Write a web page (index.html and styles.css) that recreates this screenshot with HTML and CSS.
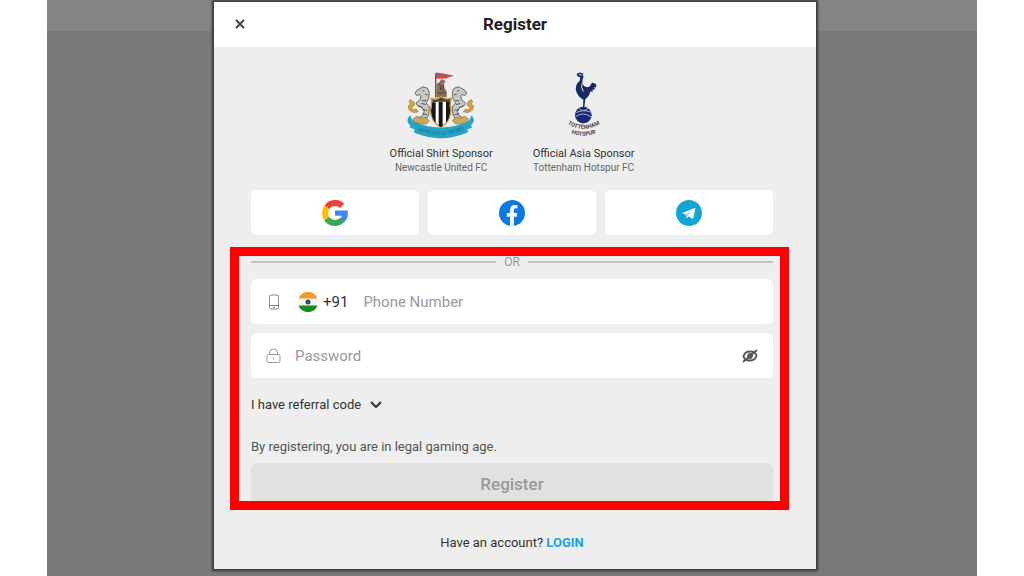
FILE: index.html
```html
<!DOCTYPE html>
<html lang="en">
<head>
  <meta charset="UTF-8">
  <meta name="viewport" content="width=device-width, initial-scale=1.0">
  <title>Register</title>
  <link rel="stylesheet" href="styles.css">
</head>
<body>
  <div class="backdrop">
    <main class="modal">
      <header class="modal-header">
        <button class="close" type="button" aria-label="Close">
          <svg width="10" height="10" viewBox="0 0 10 10"><path d="M1 1l8 8M9 1l-8 8" stroke="#444" stroke-width="2" fill="none"/></svg>
        </button>
        <h1>Register</h1>
      </header>

      <div class="modal-body">
        <div class="sponsors">
          <div class="sponsor">
            <svg width="68" height="67" viewBox="54 38 204 200" aria-hidden="true">
              <!-- flag and castle -->
              <path d="M140 42v72" stroke="#555" stroke-width="4"/>
              <path d="M141 39l22 3 32 7-26 8-28 1z" fill="#d8474b"/>
              <path d="M141 41l24 4-24 5z" fill="#7d6577"/>
              <path d="M143 73l9-6 4-8 8 2 6 5-6 7 3 14 6 8v18h-31V97z" fill="#8b7257"/>
              <path d="M150 75l7 5-4 12m11-17l-3 17M145 98l9 5 9-5 9 5" stroke="#3f3933" stroke-width="3" fill="none"/>
              <!-- seahorses -->
              <g id="seahorse">
                <path d="M76 129l-12-9-4 7 6 7-9 5 4 13 13 7 14-2-6-8-9 2-6-8 9-5z" fill="#d9a531" stroke="#94753c" stroke-width="2"/>
                <path d="M102 82l13 4 6 12-2 20-8 12 10 12-2 25-9 13-15 5-8-10 14-6 5-14-9-13-11-3-5-8 12-10 3-12-3-4-10 3-5-7 6-9z" fill="#c9c9c9" stroke="#666" stroke-width="3"/>
                <path d="M101 93l5 2M99 124l13-1M97 132l13 3M101 151l14 1M101 162l13 4M88 139l14 7M108 104l8 2" stroke="#555" stroke-width="3"/>
                <path d="M72 179l12-9 12 7 14-4 11 11-9 9-18 1-19-5z" fill="#cda950" stroke="#7c6845" stroke-width="2"/>
              </g>
              <use href="#seahorse" transform="translate(311 0) scale(-1 1)"/>
              <!-- shield -->
              <path d="M127 117q14 5 29-5 14 10 31 4-5 16-1 36-2 36-31 50-28-13-31-50 6-16 3-35z" fill="#fff" stroke="#c79b3c" stroke-width="4"/>
              <path d="M129 128h11v62q-12-12-14-38 5-12 3-24zM149 126h12v74l-6 3-6-4zM171 126h12q-3 14 1 26-2 25-13 38z" fill="#171719"/>
              <path d="M129 119q14 5 27-5 14 9 28 4l-3 10q-25-4-50 0z" fill="#4d4131"/>
              <!-- ribbon -->
              <path d="M64 168q-10 7-8 20l8 11-1 6 14 4-2 10q42 18 80 17 40 0 82-18l-2-9 14-4-3-7 8-11q2-13-7-19l-6 16q-40 20-86 20t-85-21z" fill="#25a4c4"/>
              <path id="ribbon-line" d="M72 206q80 40 168-1" fill="none"/>
              <text class="ribbon-text"><textPath href="#ribbon-line" startOffset="50%">NEWCASTLE UNITED</textPath></text>
            </svg>
            <strong>Official Shirt Sponsor</strong>
            <span>Newcastle United FC</span>
          </div>
          <div class="sponsor">
            <svg width="34" height="67" viewBox="114 36 102 200" aria-hidden="true">
              <!-- cockerel -->
              <path d="M143 42q8-6 16-3 5 4 4 13-6 12 1 24 7 8 18 3l7-11q6-1 13 5l-1 8-7 1 5 5-9 2 2 6-8-1q-3 14-15 23l-3 24 9 3-1 3-9-2-8 7-3-2 8-9 1-22q-18-11-22-28-3-18 11-29l2-11-8-2z" fill="#192866"/>
              <path d="M150 43l8 2M160 68q-6 14 3 26" stroke="#e5e8ef" stroke-width="3" fill="none"/>
              <path d="M149 43l-4-5M155 41l-1-5M160 43l3-5" stroke="#333b55" stroke-width="2"/>
              <!-- ball -->
              <circle cx="163" cy="165" r="25" fill="#1b2a75"/>
              <path d="M142 157q23-10 44-1M140 169q24-16 47 2M151 146q11 10 26-1" stroke="#a9b7d6" stroke-width="3" fill="none"/>
              <path id="name-top" d="M116 192q47 28 96 0" fill="none"/>
              <path id="name-bottom" d="M120 216q43 22 88 0" fill="none"/>
              <text class="crest-text"><textPath href="#name-top" startOffset="50%">TOTTENHAM</textPath></text>
              <text class="crest-text"><textPath href="#name-bottom" startOffset="50%">HOTSPUR</textPath></text>
            </svg>
            <strong>Official Asia Sponsor</strong>
            <span>Tottenham Hotspur FC</span>
          </div>
        </div>

        <div class="social">
          <button type="button" aria-label="Google">
            <svg width="26" height="26" viewBox="0 0 26 26" fill="none" stroke-width="6">
              <path d="M5 7.200a10 10 0 0 1 15.200-1.300" stroke="#ea4335"/>
              <path d="M4.800 18.700a10 10 0 0 1 .2-11.500" stroke="#fbbc05"/>
              <path d="M20 20.200a10 10 0 0 1-15.200-1.500" stroke="#34a853"/>
              <path d="M13 10.500h12.800q.9 7.500-3.700 12l-4.400-3.600q1.700-1.200 2.300-3.200H13z" fill="#4285f4"/>
            </svg>
          </button>
          <button type="button" aria-label="Facebook">
            <svg width="26" height="26" viewBox="0 0 26 26">
              <circle cx="13" cy="13" r="13" fill="#0b78e3"/>
              <path d="M11 25.800v-9H7.800V13H11v-2.800c0-3.400 2-5.200 4.900-5.200 1.200 0 2.500.2 2.500.2v3h-1.500c-1.600 0-2 .9-2 1.900V13h3.400l-.6 3.800h-2.800v9a13 13 0 0 1-3.900 0z" fill="#fff"/>
            </svg>
          </button>
          <button type="button" aria-label="Telegram">
            <svg width="26" height="26" viewBox="0 0 26 26">
              <circle cx="13" cy="13" r="13" fill="#13a5d8"/>
              <path d="M6 13.200L18.500 8q1-.3.800.9L17.300 18q-.4 1.200-1.400.5l-3-2.200-1.800 1.700q-.5.400-.6-.5L9.600 14.500z" fill="#fff"/>
              <path d="M9.700 14.400l6.800-4.200-4.800 5.300-.6 2.500z" fill="#8bd2eb"/>
            </svg>
          </button>
        </div>

        <form class="register-form">
          <div class="divider"><span>OR</span></div>

          <div class="field phone">
            <svg width="16" height="16" viewBox="0 0 16 16" fill="none" stroke="#888"><rect x="3.500" y="1" width="9" height="14" rx="1.500"/><path d="M3.500 11.500h9M7 13.300h2"/></svg>
            <label class="country" for="phone">
              <svg width="20" height="20" viewBox="0 0 20 20" aria-hidden="true">
                <circle cx="10" cy="10" r="10" fill="#f4f4f2"/>
                <path d="M.6 6.500a10 10 0 0 1 18.800 0z" fill="#f29a2e"/>
                <path d="M.6 13.500a10 10 0 0 0 18.800 0z" fill="#168a1d"/>
                <circle cx="10" cy="10" r="2.500" fill="#39466d"/>
              </svg>
              +91
            </label>
            <input id="phone" type="tel" placeholder="Phone Number">
          </div>

          <div class="field">
            <label class="lock" for="password" aria-label="Password">
              <svg width="16" height="16" viewBox="0 0 16 16" fill="none" stroke="#999"><rect x="1" y="6.500" width="13" height="8" rx="1.500"/><path d="M3.500 6.500V5a4 4 0 0 1 8 0v1.500M7.500 9.500v2"/></svg>
            </label>
            <input id="password" type="password" placeholder="Password">
            <button class="reveal" type="button" aria-label="Show password">
              <svg width="16" height="14" viewBox="0 0 16 14" fill="none" stroke="#555" stroke-width="1.800"><path d="M1.500 7.500q1-5 6.500-5t6.500 4q-1 5-6.500 5t-6.500-4z"/><circle cx="8" cy="7" r="2"/><path d="M1 13L15 1"/></svg>
            </button>
          </div>

          <button class="referral" type="button">
            I have referral code
            <svg width="12" height="8" viewBox="0 0 12 8"><path d="M1 1l5 5 5-5" fill="none" stroke="#333" stroke-width="2"/></svg>
          </button>
          <p class="legal">By registering, you are in legal gaming age.</p>
          <button class="submit" type="submit" disabled>Register</button>
          <div class="highlight"></div>
        </form>

        <p class="login">Have an account? <a href="#">LOGIN</a></p>
      </div>
    </main>
  </div>
</body>
</html>
```
FILE: styles.css
```css
* {
  box-sizing: border-box;
}
body {
  margin: 0;
  background: #fff;
  color: #333;
  font-family: Roboto, "Liberation Sans", sans-serif;
}
button, input {
  font-family: inherit;
  border: none;
  padding: 0;
}
svg {
  display: block;
  flex: none;
}
.backdrop {
  min-height: 100vh;
  margin: 0 47px;
  padding: 2px 161px 6px 167px;
  background: linear-gradient(#848484 31px, #797979 31px);
}
.modal {
  background: #eee;
  box-shadow: 0 0 2px 2px #3a3a3a;
}
.modal-header {
  display: grid;
  grid-template-columns: 40px 1fr 46px;
  align-items: center;
  height: 45px;
  padding: 0 0 2px 6px;
  background: #fff;
}
.close {
  display: grid;
  place-items: center;
  height: 40px;
  background: none;
}
.modal-header h1 {
  margin: 0;
  font-size: 17px;
  line-height: 20px;
  font-weight: 700;
  color: #222;
  text-align: center;
}
.modal-body {
  padding: 25px 43px 17px 37px;
}

.sponsors {
  display: flex;
  justify-content: center;
  gap: 40px;
}
.sponsor {
  display: flex;
  flex-direction: column;
  align-items: center;
}
.sponsor strong {
  margin-top: 8px;
  font-size: 11px;
  line-height: 14px;
  font-weight: 400;
  color: #333;
}
.sponsor span {
  font-size: 10px;
  line-height: 14px;
  color: #666;
}
.ribbon-text {
  font-size: 15px;
  fill: #12718c;
  text-anchor: middle;
}
.crest-text {
  font-size: 17px;
  font-weight: 700;
  fill: #444;
  text-anchor: middle;
}

.social {
  display: grid;
  grid-template-columns: repeat(3, 1fr);
  gap: 9px;
  margin-top: 15px;
}
.social button {
  display: grid;
  place-items: center;
  height: 45px;
  border-radius: 6px;
  background: #fff;
}

.register-form {
  position: relative;
  margin-top: 12px;
  padding-top: 7px;
}
/* red frame lies over the form */
.highlight {
  position: absolute;
  inset: 0 -16px -5px -21px;
  border: 9px solid #f00;
  pointer-events: none;
}
.divider {
  display: flex;
  align-items: center;
  gap: 8px;
  height: 16px;
  font-size: 12px;
  color: #999;
}
.divider::before, .divider::after {
  content: "";
  flex: 1;
  height: 2px;
  background: #c2c2c2;
}
.field {
  display: flex;
  align-items: center;
  height: 45px;
  margin-top: 9px;
  padding: 0 15px;
  border-radius: 6px;
  background: #fff;
}
.country {
  display: flex;
  align-items: center;
  gap: 5px;
  margin: 0 15px 0 16px;
  font-size: 15px;
  color: #333;
}
.lock {
  margin-right: 13px;
}
.field input {
  flex: 1;
  min-width: 0;
  height: 40px;
  font-size: 15px;
  background: none;
  outline: none;
}
.field input::placeholder {
  color: #999;
}
.reveal {
  background: none;
}
.referral {
  display: flex;
  align-items: center;
  gap: 9px;
  margin-top: 18px;
  font-size: 13px;
  line-height: 18px;
  color: #333;
  background: none;
}
.legal {
  margin: 24px 0 7px;
  font-size: 13px;
  line-height: 18px;
  color: #555;
}
.submit {
  display: block;
  width: 100%;
  height: 42px;
  border-radius: 6px;
  font-size: 17px;
  font-weight: 500;
  color: #999;
  background: #e1e1e1;
}
.login {
  margin: 29px 0 0;
  font-size: 13px;
  line-height: 18px;
  text-align: center;
}
.login a {
  font-weight: 700;
  color: #1da1e6;
  text-decoration: none;
}
```
